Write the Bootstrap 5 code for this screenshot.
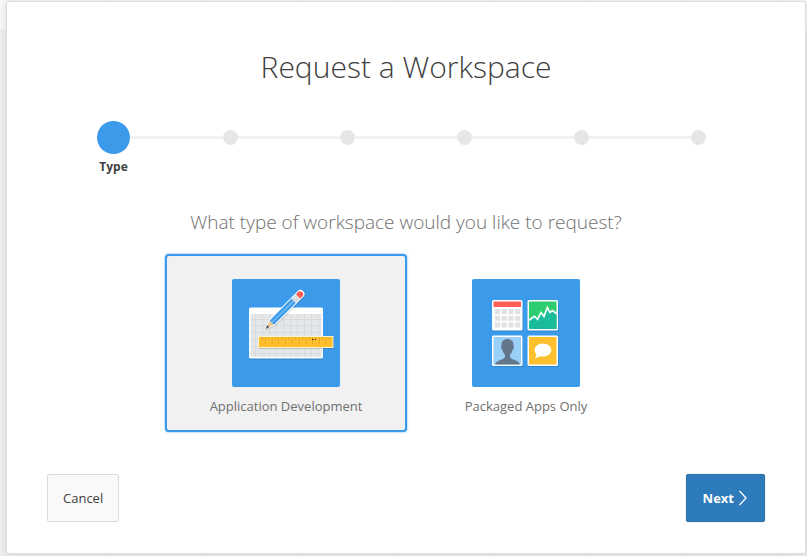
<!DOCTYPE html>
<html lang="en">
<head>
<meta charset="utf-8">
<meta name="viewport" content="width=device-width, initial-scale=1">
<title>Request a Workspace</title>
<link href="https://cdn.jsdelivr.net/npm/bootstrap@5.3.0/dist/css/bootstrap.min.css" rel="stylesheet">
<style>
body {
  font-family: "Open Sans", "Noto Sans", sans-serif;
  font-size: 13px;
  line-height: 20px;
  color: #404040;
  background:
    repeating-linear-gradient(90deg, transparent 0 10px, #e6e6e6 10px 11px, transparent 11px 96px),
    linear-gradient(#f9f9f9 0 29px, #f0f0f0 29px);
  padding: 1px 1px 2px 6px;
}
.wizard {
  background: #fff;
  border: 1px solid #dcdcdc;
  border-radius: 2px;
  box-shadow: 0 1px 8px rgba(0, 0, 0, .12);
  padding: 41px 40px 31px;
}
.wizard-title { font-size: 30px; font-weight: 300; line-height: 48px; margin: 0 0 28px; }
.steps { padding: 0 8px; height: 84px; }
.step { flex: 1 1 0; min-width: 0; }
.step-track { height: 37px; }
.step-line { height: 3px; background: #f1f1f1; }
.step:first-child .step-line:first-child,
.step:last-child .step-line:last-child { background: transparent; }
.step-dot { width: 15px; height: 15px; background: #e6e6e6; }
.step.current .step-dot { width: 33px; height: 33px; background: #3b9bea; }
.step-label { font-size: 12px; font-weight: 700; line-height: 16px; margin-top: 3px; }
.question { font-size: 19px; font-weight: 300; line-height: 28px; color: #707070; margin: 5px 0 18px; }
.option {
  width: 242px;
  height: 178px;
  border: 2px solid transparent;
  border-radius: 4px;
  padding-top: 23px;
  color: #707070;
  cursor: pointer;
}
.option + .btn-check + .option { margin-left: -2px; }
.btn-check:checked + .option { border-color: #3b9bea; background: #f1f1f1; box-shadow: 0 0 2px #3b9bea; }
.option svg { width: 108px; height: 108px; border-radius: 2px; margin-bottom: 9px; }
.actions { margin-top: 42px; }
.wizard-btn { height: 48px; border-radius: 2px; font-size: 13px; line-height: 20px; padding: 0 15px; }
.btn-cancel, .btn-cancel:hover { background: #f9f9f9; border: 1px solid #dcdcdc; color: #404040; }
.btn-next, .btn-next:hover { background: #2d7bbb; border: 1px solid #2a72ae; color: #fff; font-weight: 700; box-shadow: 0 0 2px rgba(0, 0, 0, .2); padding: 0 16px; }
.btn-next svg { width: 10px; height: 16px; }
</style>
</head>
<body>
<main class="wizard">
  <h1 class="wizard-title text-center">Request a Workspace</h1>

  <ol class="steps list-unstyled d-flex mb-0" aria-label="Progress">
    <li class="step current text-center" aria-current="step">
      <div class="step-track d-flex align-items-center"><span class="step-line flex-fill"></span><span class="step-dot rounded-circle"></span><span class="step-line flex-fill"></span></div>
      <div class="step-label">Type</div>
    </li>
    <li class="step"><div class="step-track d-flex align-items-center"><span class="step-line flex-fill"></span><span class="step-dot rounded-circle"></span><span class="step-line flex-fill"></span></div></li>
    <li class="step"><div class="step-track d-flex align-items-center"><span class="step-line flex-fill"></span><span class="step-dot rounded-circle"></span><span class="step-line flex-fill"></span></div></li>
    <li class="step"><div class="step-track d-flex align-items-center"><span class="step-line flex-fill"></span><span class="step-dot rounded-circle"></span><span class="step-line flex-fill"></span></div></li>
    <li class="step"><div class="step-track d-flex align-items-center"><span class="step-line flex-fill"></span><span class="step-dot rounded-circle"></span><span class="step-line flex-fill"></span></div></li>
    <li class="step"><div class="step-track d-flex align-items-center"><span class="step-line flex-fill"></span><span class="step-dot rounded-circle"></span><span class="step-line flex-fill"></span></div></li>
  </ol>

  <form>
    <h2 class="question text-center" id="question">What type of workspace would you like to request?</h2>
    <div class="d-flex flex-wrap justify-content-center" role="radiogroup" aria-labelledby="question">
      <input class="btn-check" type="radio" name="type" id="type-dev" checked>
      <label class="option d-flex flex-column align-items-center" for="type-dev">
        <svg viewBox="0 0 108 108" aria-hidden="true">
          <rect width="108" height="108" fill="#3b9bea"/>
          <rect x="17" y="29.500" width="74" height="51" rx="1.500" fill="#2a7fc5"/>
          <rect x="17" y="28.500" width="74" height="51" rx="1.500" fill="#fff"/>
          <rect x="18.500" y="35" width="71" height="43" fill="#e4e6e8"/>
          <path d="M23.500 35v43M30.500 35v43M37.500 35v43M44.500 35v43M51.500 35v43M58.500 35v43M65.500 35v43M72.500 35v43M79.500 35v43M86.500 35v43M18.500 40.500h71M18.500 46.500h71M18.500 53.500h71M18.500 60.500h71M18.500 67.500h71M18.500 74.500h71" stroke="#d6d9dc" stroke-width=".8"/>
          <rect x="26" y="58" width="76" height="12" fill="#000" opacity=".15"/>
          <rect x="26" y="57" width="75.500" height="12" fill="#fff3d0"/>
          <rect x="27" y="58" width="73.500" height="10" fill="#ffbf2c"/>
          <path d="M33.500 58v7M40 58v7M46.500 58v7M53.500 58v7M60 58v7M67 58v7M74 58v7M80.500 58v7M87.500 58v7M94 58v7" stroke="#e2a61f" stroke-width=".8"/>
          <path d="M30 58v3M36.500 58v3M43.500 58v3M50 58v3M57 58v3M63.500 58v3M70.500 58v3M77.500 58v3M84 58v3M91 58v3M97.500 58v3" stroke="#eaae24" stroke-width="1.500"/>
          <path d="M80 60h1.500v1H80zM83 60h1v1h-1z" fill="#33270a"/>
          <g transform="translate(33.500 50) rotate(-45)">
            <path d="M-1 1 9-3H50a4 4 0 0 1 0 8H9z" fill="#000" opacity=".13"/>
            <path d="M-1.500 0 9-4H49.500a4 4 0 0 1 0 8H9z" fill="#fff"/>
            <path d="M0 0 9-3V3z" fill="#edc795"/>
            <path d="M0 0 4-1.500V1.500z" fill="#55585c"/>
            <path d="M9-3H40V3H9z" fill="#3b9bea"/>
            <path d="M9-1H40V1H9z" fill="#67b5f2"/>
            <path d="M40-3.200h6v6.400h-6z" fill="#e2e4e6"/>
            <path d="M41.500-3v6M44-3v6" stroke="#c3c7ca" stroke-width=".7"/>
            <path d="M46-3h3a3 3 0 0 1 0 6h-3z" fill="#fb5c56"/>
          </g>
        </svg>
        Application Development
      </label>
      <input class="btn-check" type="radio" name="type" id="type-apps">
      <label class="option d-flex flex-column align-items-center" for="type-apps">
        <svg viewBox="0 0 108 108" aria-hidden="true">
          <rect width="108" height="108" fill="#3b9bea"/>
          <g fill="#2b84cc"><rect x="20" y="22" width="31" height="30.500" rx="1.500"/><rect x="55.500" y="22" width="31" height="30.500" rx="1.500"/><rect x="20" y="57" width="31" height="31" rx="1.500"/><rect x="55.500" y="57" width="31" height="31" rx="1.500"/></g>
          <g fill="#fff"><rect x="20" y="21" width="30.500" height="30.500" rx="1.500"/><rect x="55.500" y="21" width="30.500" height="30.500" rx="1.500"/><rect x="20" y="56.500" width="30.500" height="30.500" rx="1.500"/><rect x="55.500" y="56.500" width="30.500" height="30.500" rx="1.500"/></g>
          <rect x="21.500" y="22.500" width="27.500" height="5.500" fill="#fc605a"/>
          <path d="M22.800 32.500H49M22.800 39.300H49M22.800 46.100H49" stroke="#e2e2e4" stroke-width="5" stroke-dasharray="5.200 1.600"/>
          <rect x="57" y="22.500" width="27.500" height="27.500" fill="#2ecc71"/>
          <path d="M57 41 62.500 37 66 40 69.500 33 72 37 75.500 28 78 33 80 31 84.500 34V50H57z" fill="#1abc9c"/>
          <path d="M56.500 41.500 62.500 37.300 65.500 40.300 69 33.500 72 37.500 75.300 28.500 78 33.500 80.500 31.500 85 35" fill="none" stroke="#fff" stroke-width="1.600"/>
          <rect x="21.500" y="58" width="27.500" height="27.500" fill="#98d0f8"/>
          <path d="M23 85.500c1-3 4-4 7-5.200 2.500-1 3.200-1.800 3-4.300-1.500-1.500-2-3-2.500-5-1.500-1-1.800-3.500-1-4.500-.5-4 2.500-6.500 6-6.500s6.500 2.500 6 6.500c.8 1 .5 3.500-1 4.500-.5 2-1 3.500-2.500 5-.2 2.500.5 3.300 3 4.300 3 1.200 6 2.200 7 5.200z" fill="#63768a"/>
          <rect x="57" y="58" width="27.500" height="27.500" fill="#ffc02d"/>
          <path d="M71 64.500c4.700 0 8.300 2.900 8.300 6.500s-3.600 6.600-8.300 6.600c-1 0-2-.1-2.900-.4L63 79.500l1.600-4c-1.300-1.200-2-2.800-2-4.500 0-3.600 3.700-6.500 8.400-6.500z" fill="#fff"/>
        </svg>
        Packaged Apps Only
      </label>
    </div>

    <div class="actions d-flex justify-content-between">
      <button type="button" class="btn wizard-btn btn-cancel">Cancel</button>
      <button type="submit" class="btn wizard-btn btn-next d-flex align-items-center gap-1">Next
        <svg viewBox="0 0 10 16" aria-hidden="true"><path d="M1.500 1 8 8 1.500 15" fill="none" stroke="#fff" stroke-width="1.300"/></svg>
      </button>
    </div>
  </form>
</main>
<script src="https://cdn.jsdelivr.net/npm/bootstrap@5.3.0/dist/js/bootstrap.bundle.min.js"></script>
</body>
</html>
